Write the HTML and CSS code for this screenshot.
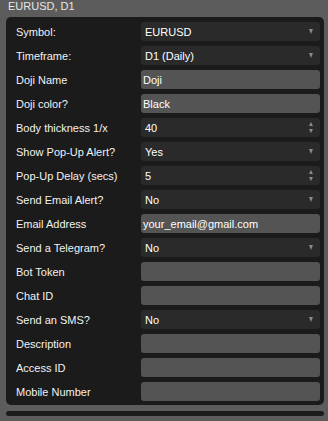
FILE: index.html
```html
<!DOCTYPE html>
<html>
<head>
<meta charset="utf-8">
<link rel="stylesheet" href="styles.css">
</head>
<body>
<div class="title">EURUSD, D1</div>
<div class="panel">
  <div class="label">Symbol:</div>
  <div class="box select"><span>EURUSD</span><i class="arrow"></i></div>
  <div class="label">Timeframe:</div>
  <div class="box select"><span>D1 (Daily)</span><i class="arrow"></i></div>
  <div class="label">Doji Name</div>
  <div class="box text"><span>Doji</span></div>
  <div class="label">Doji color?</div>
  <div class="box text"><span>Black</span></div>
  <div class="label">Body thickness 1/x</div>
  <div class="box select"><span>40</span><i class="spin"><b class="up"></b><b class="down"></b></i></div>
  <div class="label">Show Pop-Up Alert?</div>
  <div class="box select"><span>Yes</span><i class="arrow"></i></div>
  <div class="label">Pop-Up Delay (secs)</div>
  <div class="box select"><span>5</span><i class="spin"><b class="up"></b><b class="down"></b></i></div>
  <div class="label">Send Email Alert?</div>
  <div class="box select"><span>No</span><i class="arrow"></i></div>
  <div class="label">Email Address</div>
  <div class="box text"><span>your_email@gmail.com</span></div>
  <div class="label">Send a Telegram?</div>
  <div class="box select"><span>No</span><i class="arrow"></i></div>
  <div class="label">Bot Token</div>
  <div class="box text"></div>
  <div class="label">Chat ID</div>
  <div class="box text"></div>
  <div class="label">Send an SMS?</div>
  <div class="box select"><span>No</span><i class="arrow"></i></div>
  <div class="label">Description</div>
  <div class="box text"></div>
  <div class="label">Access ID</div>
  <div class="box text"></div>
  <div class="label">Mobile Number</div>
  <div class="box text"></div>
</div>
<div class="scrollbar"></div>
</body>
</html>
```
FILE: styles.css
```css
html, body {
  margin: 0;
  padding: 0;
}
body {
  width: 328px;
  height: 421px;
  overflow: hidden;
  background: #5c5c5c;
  font-family: "Liberation Sans", Arial, sans-serif;
  font-size: 11px;
  color: #f2f2f2;
}
.title {
  height: 17px;
  line-height: 13px;
  padding-left: 8px;
  color: #e6e6e6;
  box-sizing: border-box;
}
.panel {
  margin: 0 4px 0 6px;
  padding: 5px 4px 4px 10px;
  background: #1b1b1b;
  border-radius: 5px;
  display: grid;
  grid-template-columns: 125px 179px;
  grid-auto-rows: 19px;
  row-gap: 5px;
}
.label {
  line-height: 18px;
  padding-top: 1px;
  white-space: nowrap;
}
.box {
  border-radius: 3px;
  display: flex;
  align-items: center;
  line-height: 19px;
  color: #ffffff;
  white-space: nowrap;
}
.box span {
  position: relative;
  top: 1px;
}
.select {
  background: #2a2a2a;
  padding: 0 4px 0 4px;
  justify-content: space-between;
}
.text {
  background: #545454;
  padding: 0 2px;
}
.arrow {
  width: 0;
  height: 0;
  border-left: 2.5px solid transparent;
  border-right: 2.5px solid transparent;
  border-top: 5px solid #8a8a8a;
  margin-right: 3px;
}
.spin {
  display: flex;
  flex-direction: column;
  gap: 3px;
  margin-right: 3px;
}
.spin b {
  display: block;
  width: 0;
  height: 0;
  border-left: 2.5px solid transparent;
  border-right: 2.5px solid transparent;
}
.spin .up {
  border-bottom: 4px solid #8a8a8a;
}
.spin .down {
  border-top: 4px solid #8a8a8a;
}
.scrollbar {
  margin: 6px 4px 0 6px;
  height: 5px;
  background: #1b1b1b;
  border-radius: 3px;
}
```
